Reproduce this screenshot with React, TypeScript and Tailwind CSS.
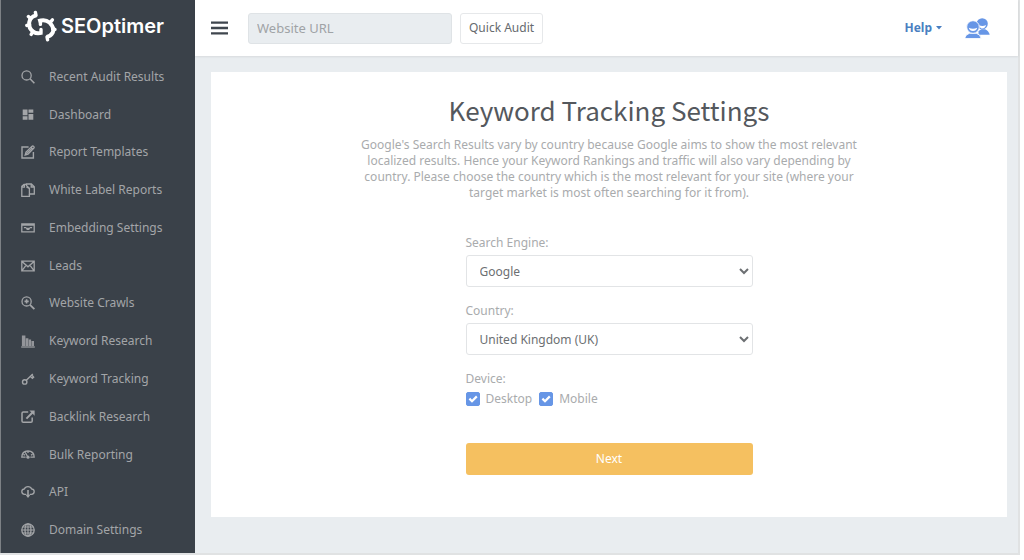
import { useState, type ReactNode } from "react";

function Glyph({ children }: { children: ReactNode }) {
  return (
    <svg
      viewBox="0 0 14 14"
      className="size-[14px] shrink-0"
      fill="none"
      stroke="currentColor"
      strokeWidth="1.3"
      aria-hidden="true"
    >
      {children}
    </svg>
  );
}

const navItems: { label: string; icon: ReactNode }[] = [
  {
    label: "Recent Audit Results",
    icon: (
      <>
        <circle cx="5.6" cy="5.4" r="4.6" />
        <path d="M9 8.8 13.4 13.2" strokeWidth="1.6" />
      </>
    ),
  },
  {
    label: "Dashboard",
    icon: (
      <path
        d="M1.700 1.600h4.800v5.600H1.700zM7.500 1.600h4.800v3.200H7.500zM7.500 5.900h4.800v5.900H7.500zM1.700 8.300h4.800v3.500H1.700z"
        fill="currentColor"
        stroke="none"
      />
    ),
  },
  {
    label: "Report Templates",
    icon: (
      <>
        <path d="M7.600 2H1v11h11.400V7" strokeWidth="1.4" />
        <path d="M4.200 10 5 7.200 10.800 1.400q1-.9 1.900 0t0 1.900L7 9.200Z" />
        <path d="M10 2.300 12 4.200M5.300 8.900 11 3.200" />
      </>
    ),
  },
  {
    label: "White Label Reports",
    icon: (
      <>
        <path d="M8.400 11v2.300H.8V3.400L3 1.400h2.400M.8 4.200h2.600V1.400" />
        <path d="M5.400 1h5L13.300 3.800V11H8.400V5.200L5.400 2.400ZM10.200 1v3h3M5.400 4l2.800 1.400" />
      </>
    ),
  },
  {
    label: "Embedding Settings",
    icon: (
      <>
        <path d="M.8 2.900h12.400v8H.8zM.8 4.100h12.400" />
        <path
          d="M2.900 6h2l.8.800h2.600l.8-.8h2v1.300h-2L8.200 9H5.800L4.900 7.300h-2z"
          fill="currentColor"
          stroke="none"
        />
      </>
    ),
  },
  {
    label: "Leads",
    icon: <path d="M.8 2.200h12.400v9.600H.8zM1 2.400l6 5.400 6-5.400M1 11.600 5 6.400M13 11.600 9 6.400" />,
  },
  {
    label: "Website Crawls",
    icon: (
      <>
        <circle cx="5.6" cy="5.4" r="4.6" />
        <path d="M9 8.8 13.4 13.2" strokeWidth="1.8" />
        <path d="M3.500 5.400h4.200M5.600 3.300v4.200" strokeWidth="1.6" />
      </>
    ),
  },
  {
    label: "Keyword Research",
    icon: (
      <>
        <path d="M.2 13h13.600" strokeWidth="1.2" />
        <path
          d="M.9 1.600h3.500V12H.9zM4.800 4.200h2.600V12H4.800zM7.800 5.600h2.300V12H7.800zM10.500 7h2.500v5h-2.500z"
          fill="currentColor"
          fillOpacity="0.85"
          stroke="none"
        />
      </>
    ),
  },
  {
    label: "Keyword Tracking",
    icon: (
      <>
        <circle cx="3.7" cy="9.9" r="2.2" strokeWidth="1.4" />
        <path d="M5.300 8.300 11.800 2M9.400 4.200l2 2 1.200-1-1.400-1.800" strokeWidth="1.4" />
      </>
    ),
  },
  {
    label: "Backlink Research",
    icon: (
      <>
        <path
          d="M7.200 2H2.300Q1 2 1 3.300v7.600q0 1.300 1.300 1.300h7.600q1.300 0 1.300-1.300V7.600"
          strokeWidth="1.5"
        />
        <path d="M5.400 8.600 12 2" strokeWidth="2" />
        <path d="M8.400.6h5.200v5.200z" fill="currentColor" stroke="none" />
      </>
    ),
  },
  {
    label: "Bulk Reporting",
    icon: (
      <>
        <path d="M4.600 9.200H.8Q.9 3 7 3t6.200 6.200H9.400" />
        <path d="M2.400 6.400 4 7.200M11.600 6.400 10 7.200M7 3v2M4.200 4.300 6.800 9" />
        <circle cx="7" cy="9.2" r="1.6" fill="currentColor" stroke="none" />
      </>
    ),
  },
  {
    label: "API",
    icon: (
      <>
        <path d="M5.200 9.300H3.600Q.8 9.200.8 6.500.9 4.200 3.300 4 4.300 1.600 7 1.600T10.700 4q2.400.2 2.500 2.500 0 2.700-2.800 2.800H8.800" />
        <path d="M7 5v7" strokeWidth="1.6" />
        <path d="M4.600 9.800h4.800L7 13z" fill="currentColor" stroke="none" />
      </>
    ),
  },
  {
    label: "Domain Settings",
    icon: (
      <>
        <circle cx="7" cy="7" r="6.2" />
        <ellipse cx="7" cy="7" rx="3" ry="6.2" />
        <path d="M7 .8v12.400M.8 7h12.400M1.700 4h10.600M1.700 10h10.600" strokeWidth="1.1" />
      </>
    ),
  },
];

function Logo() {
  return (
    <a href="#" className="flex items-center gap-1 pl-6 text-white">
      <svg viewBox="0 0 32 32" className="size-8 shrink-0" fill="none" stroke="currentColor" aria-hidden="true">
        <path d="M11.400 5.400Q5 6.600 4.200 12.600T8.600 22Q12 24.200 17.200 22.600" strokeWidth="4" />
        <path
          d="M11 5.400 10.400 2.400M5.800 8.800 3.400 6.600M4.600 14.800 1.800 15.400M8 21.400 6.200 24.400M16 22.400V19.400"
          strokeWidth="3.4"
          strokeLinecap="round"
        />
        <path d="M13.200 11.200Q20 8.600 24.400 12.400 30 18 27.600 22.800 25.600 26.400 21.600 27" strokeWidth="4" />
        <path
          d="M15.400 11.400V14.400M25.200 12.400 27.400 9.800M27.600 19 30 19.400M22 26.800l.6 3"
          strokeWidth="3.4"
          strokeLinecap="round"
        />
      </svg>
      <span className="font-['Inter',sans-serif] text-[20px] leading-8 font-semibold">SEOptimer</span>
    </a>
  );
}

function Sidebar() {
  return (
    <aside className="flex w-[195px] shrink-0 flex-col border-l border-[#7d8185] bg-[#3a4149] pt-[10px] pb-1">
      <Logo />
      <nav className="mt-4 flex flex-1 flex-col">
        {navItems.map((item) => (
          <a
            key={item.label}
            href="#"
            className="flex flex-1 items-center gap-[14px] pl-5 text-[12px] leading-4 whitespace-nowrap text-[#a3a5a8]"
          >
            <Glyph>{item.icon}</Glyph>
            {item.label}
          </a>
        ))}
      </nav>
    </aside>
  );
}

function Header() {
  return (
    <header className="flex h-14 items-center bg-white pr-7 pl-4 shadow-[0_1px_2px_rgba(0,0,0,0.08)]">
      <button type="button" aria-label="Toggle menu" className="mr-5 text-[#3f464e]">
        <svg viewBox="0 0 17 14" className="h-[14px] w-[17px]" fill="currentColor" aria-hidden="true">
          <path d="M0 .4h17v2.400H0zM0 5.800h17v2.400H0zM0 11.200h17v2.400H0z" />
        </svg>
      </button>
      <form className="flex gap-2" onSubmit={(e) => e.preventDefault()}>
        <input
          type="text"
          aria-label="Website URL"
          placeholder="Website URL"
          className="h-[31px] w-[204px] rounded-[3px] border border-[#dfe3e6] bg-[#e9edf0] px-2 text-[13px] text-[#555] placeholder:text-[#a0a3a6]"
        />
        <button
          type="submit"
          className="h-[31px] rounded-[3px] border border-[#e6e8ea] bg-white px-2 text-[12px] text-[#666a6e]"
        >
          Quick Audit
        </button>
      </form>
      <div className="ml-auto flex items-center gap-[23px]">
        <button type="button" className="flex items-center gap-1 text-[12px] font-bold text-[#4a7fc1]">
          Help
          <svg viewBox="0 0 6 4" className="h-1 w-[6px]" fill="currentColor" aria-hidden="true">
            <path d="M0 0h6L3 3.400z" />
          </svg>
        </button>
        <button type="button" aria-label="Account">
          <svg viewBox="0 0 25 21" className="h-[21px] w-[25px]" fill="#6796e6" aria-hidden="true">
            <circle cx="17.2" cy="5.8" r="5.6" />
            <path d="M13.500 16.800V13l3-1.800h3.600q3.800 1.800 4.600 5.600z" />
            <path d="M14 7.200q3.600 1.600 7-.2-.8 3.200-3.600 3.600-2.200 0-3.400-3.400z" fill="#fff" />
            <path d="M-.4 20.600q.6-4.200 5-5.400h6.600q4.400 1.200 5 5.400z" stroke="#fff" strokeWidth=".9" />
            <circle cx="8" cy="9" r="6.3" stroke="#fff" strokeWidth=".9" />
            <path d="M3.800 9.800q4.200 1.800 8.400 0-.9 3.200-4.200 3.200T3.800 9.800z" fill="#fff" />
          </svg>
        </button>
      </div>
    </header>
  );
}

function SelectField({ id, label, options }: { id: string; label: string; options: string[] }) {
  return (
    <div className="mb-4 flex flex-col gap-1">
      <label htmlFor={id} className="leading-4">
        {label}
      </label>
      <select
        id={id}
        className="h-8 w-full rounded-[3px] border border-[#e2e4e6] bg-white pl-[9px] text-[12px] text-[#6c6f72]"
      >
        {options.map((option) => (
          <option key={option}>{option}</option>
        ))}
      </select>
    </div>
  );
}

function CheckField({ label }: { label: string }) {
  const [checked, setChecked] = useState(true);
  return (
    <label className="flex items-center gap-[6px] leading-4">
      <span className="grid size-[14px]">
        <input
          type="checkbox"
          checked={checked}
          onChange={() => setChecked(!checked)}
          className="col-start-1 row-start-1 size-[14px] appearance-none rounded-[2px] border border-[#6796e6] bg-white checked:bg-[#6796e6]"
        />
        {checked && (
          <svg
            viewBox="0 0 14 14"
            className="pointer-events-none col-start-1 row-start-1 size-[14px]"
            fill="none"
            stroke="#fff"
            strokeWidth="2.2"
            aria-hidden="true"
          >
            <path d="M3.400 6.600 6 9.200 10.800 4.400" />
          </svg>
        )}
      </span>
      {label}
    </label>
  );
}

export default function App() {
  return (
    <div className="min-h-screen bg-white pr-1 pb-[5px] font-['Noto_Sans',sans-serif]">
      <div className="flex min-h-[calc(100vh-5px)] border-r-2 border-b-2 border-[#e0e2e3]">
        <Sidebar />
        <div className="flex min-w-0 flex-1 flex-col bg-[#e9edf0]">
          <Header />
          <main className="mt-4 mr-[11px] mb-9 ml-4 flex flex-1 flex-col items-center bg-white text-[12px] text-[#a9abad]">
            <h1 className="mt-[18px] font-['Noto_Sans_CJK_SC',sans-serif] text-[26px] leading-10 text-[#54585d]">
              Keyword Tracking Settings
            </h1>
            <p className="mt-[7px] w-[500px] max-w-full text-center leading-4">
              Google's Search Results vary by country because Google aims to show the most relevant localized
              results. Hence your Keyword Rankings and traffic will also vary depending by country. Please choose
              the country which is the most relevant for your site (where your target market is most often
              searching for it from).
            </p>
            <form className="mt-[34px] w-[287px] max-w-full" onSubmit={(e) => e.preventDefault()}>
              <SelectField id="engine" label="Search Engine:" options={["Google", "Bing"]} />
              <SelectField
                id="country"
                label="Country:"
                options={["United Kingdom (UK)", "United States (US)", "Australia (AU)"]}
              />
              <fieldset>
                <legend className="leading-4">Device:</legend>
                <div className="mt-1 flex gap-[7px]">
                  <CheckField label="Desktop" />
                  <CheckField label="Mobile" />
                </div>
              </fieldset>
              <button
                type="submit"
                className="mt-9 h-8 w-full rounded-[3px] bg-[#f5c060] text-[12px] text-white"
              >
                Next
              </button>
            </form>
          </main>
        </div>
      </div>
    </div>
  );
}
